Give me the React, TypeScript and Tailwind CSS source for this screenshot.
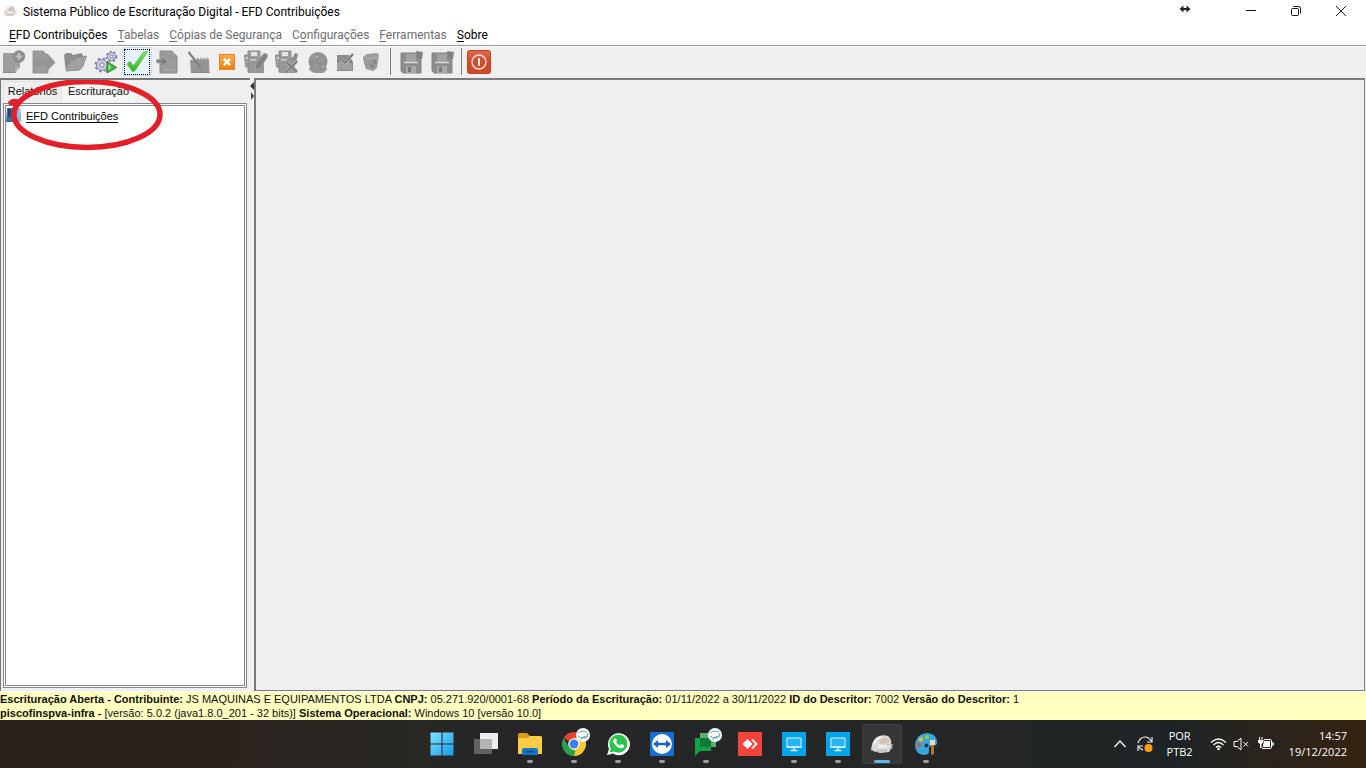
import type { ReactNode } from "react";

function Svg({ size = "size-6", box = "0 0 24 24", children }: { size?: string; box?: string; children: ReactNode }) {
  return (
    <svg viewBox={box} className={`${size} shrink-0`} aria-hidden="true">
      {children}
    </svg>
  );
}

/* ---------- Toolbar drawings ---------- */

const NewIcon = () => (
  <Svg>
    <path d="M1 3h11l6 7v7l-5 6H1z" fill="#9e9e9e" />
    <path d="M1 22.500h12M13 23v-5l5-1" stroke="#888" fill="none" />
    <path d="m13 22.500 5-5.500h-5z" fill="#b8b8b8" />
    <circle cx="17" cy="6.500" r="5.700" fill="#8d8d8d" stroke="#848484" />
    <path d="M17 3v7M13.500 6.500h7" stroke="#c4c4c4" strokeWidth="2" />
  </Svg>
);
const ExportIcon = () => (
  <Svg>
    <path d="M1 1h10l5 5v17H1z" fill="#9c9c9c" stroke="#8b8b8b" strokeWidth=".8" />
    <path d="M1 7.500h14V3l8.500 9.500L15 21v-4.500H1z" fill="#959595" />
    <path d="M2 17.500h13" stroke="#a2a2a2" />
  </Svg>
);
const FolderIcon = () => (
  <Svg>
    <path d="M1 5l2-2h5l2 2 8-2 2 2v5H8L2.500 20z" fill="#8e8e8e" />
    <path d="M3 21 7 11l4-1 2-2 10.500-2-4 11-3 3z" fill="#a1a1a1" stroke="#888" strokeWidth=".9" />
  </Svg>
);
const GearsIcon = () => (
  <Svg>
    <circle cx="8" cy="15" r="5.500" fill="#cdcde6" stroke="#8585ab" />
    <circle cx="8" cy="15" r="6.600" fill="none" stroke="#8484ab" strokeWidth="2" strokeDasharray="2.600 2.700" />
    <circle cx="8" cy="15" r="2.200" fill="#efefef" stroke="#7b7ba3" />
    <circle cx="17.500" cy="6.500" r="4" fill="#d3d3ea" stroke="#8585ab" />
    <circle cx="17.500" cy="6.500" r="4.900" fill="none" stroke="#8484ab" strokeWidth="1.800" strokeDasharray="2.100 2" />
    <circle cx="17.500" cy="6.500" r="1.600" fill="#efefef" stroke="#7b7ba3" />
    <path d="M13 11.500 22.500 17.500 13 23z" fill="#46bb3b" stroke="#257f1f" />
    <path d="M14.500 14v6.500l3-3z" fill="#8ce77f" />
  </Svg>
);
const CheckIcon = () => (
  <Svg>
    <defs>
      <linearGradient id="check" x1="0" y1="0" x2="0" y2="1">
        <stop stopColor="#8be95c" />
        <stop offset="1" stopColor="#2db422" />
      </linearGradient>
    </defs>
    <path d="M2 14 5 11.500 8.500 16 18.500 2 22.500 1.500 10 20.500 7.500 21.500z" fill="url(#check)" stroke="#3fae33" strokeWidth=".7" />
  </Svg>
);
const ImportIcon = () => (
  <Svg>
    <path d="M4 1h12l5 5v17H4z" fill="#9b9b9b" stroke="#8a8a8a" />
    <path d="M16 1v5h5" fill="#b0b0b0" stroke="#8a8a8a" />
    <path d="M.500 9.500H6V6l6 5.500L6 17v-4H.500z" fill="#7f7f7f" stroke="#adadad" strokeWidth=".8" />
    <path d="M7 19.500h11" stroke="#adadad" />
  </Svg>
);
const NotepadIcon = () => (
  <Svg>
    <path d="m3 10 4 0 0-3 2 3 2-3 1 3 2-3 1 3 2-3 1 3 2-3 1 3 1-2 .500 15H4z" fill="#959595" />
    <path d="m1.500 2 11 14 1 2.500" stroke="#808080" strokeWidth="2.200" fill="none" />
    <path d="M4 22.500h18.500" stroke="#848484" />
  </Svg>
);
const CloseIcon = () => (
  <Svg size="size-4" box="0 0 16 16">
    <defs>
      <linearGradient id="orange" x1="0" y1="0" x2="0" y2="1">
        <stop stopColor="#ffab47" />
        <stop offset="1" stopColor="#f07d10" />
      </linearGradient>
    </defs>
    <rect x=".5" y=".5" width="15" height="15" fill="url(#orange)" stroke="#ea8423" />
    <path d="m4.800 4.800 6.400 6.400m0-6.400-6.400 6.400" stroke="#fff" strokeWidth="2.600" />
  </Svg>
);
const DocsBase = () => (
  <>
    <path d="M.500 5h5v12h-4zM4 1h12v9H4z" fill="#a0a0a0" stroke="#8c8c8c" />
    <path d="M5 7h12l3 2v14H4V11z" fill="#979797" />
    <path d="M7 2h6v4H7z" fill="#e4e4e4" />
    <path d="M2 7h2v2H2zM6 9h6v1.500H6z" fill="#cfcfcf" />
    <path d="M4 13v9" stroke="#868686" />
  </>
);
const EditDocsIcon = () => (
  <Svg>
    <DocsBase />
    <path d="m11 19.500 1-6L20 3l3.500 1.500V7l-8 12z" fill="#828282" stroke="#a9a9a9" strokeWidth=".8" />
  </Svg>
);
const DeleteDocsIcon = () => (
  <Svg>
    <DocsBase />
    <path d="m17 9 3-6 3 1-2 8z" fill="#8a8a8a" />
    <path d="m11 12 11 10M22 11 11 22.500" stroke="#b0b0b0" strokeWidth="3.400" />
    <path d="m11 12 11 10M22 11 11 22.500" stroke="#7b7b7b" strokeWidth="1.800" />
  </Svg>
);
const GlobeIcon = () => (
  <Svg>
    <path d="M4 16h16l1 4-4 3H8l-5-3z" fill="#979797" />
    <circle cx="12" cy="11.500" r="9.500" fill="#919191" />
    <path d="M6 6l4-2 2 3-3 3-4 1zM14 6l4 2 1 4-3 1-3-3zM6 14l5 0 2 4-3 1z" fill="#989898" />
    <path d="M10 6h2v1h-2zM16 16h2v1h-2z" fill="#ccc" />
  </Svg>
);
const VerifyIcon = () => (
  <Svg size="size-5" box="0 0 20 20">
    <path d="M1 3h12l4 7v9H1z" fill="#8c8c8c" />
    <path d="M1 10q8-5 15 1v7H1z" fill="#a0a0a0" />
    <path d="M1 10q8-5 15 1" stroke="#737373" fill="none" />
    <path d="m5 7 4 4 8-9" stroke="#bababa" strokeWidth="3" fill="none" />
    <path d="m5 7 4 4 8-9" stroke="#6c6c6c" strokeWidth="1.400" fill="none" />
  </Svg>
);
const TrashIcon = () => (
  <Svg size="size-5" box="0 0 20 20">
    <path d="M1 5 5 2l10-1 2 2-2 13-4 3-7-2z" fill="#9c9c9c" />
    <path d="m2 5 6 2 8-3" stroke="#acacac" strokeWidth="1.500" fill="none" />
    <path d="m1.500 5.500 3 11" stroke="#8b8b8b" />
    <path d="M11 9q4-1 2 3m-1 3q-4 0-2-3" stroke="#7f7f7f" strokeWidth="1.600" fill="none" />
  </Svg>
);
const SaveIcon = () => (
  <Svg>
    <path d="M1 3h20v20H3l-2-2z" fill="#8c8c8c" stroke="#838383" />
    <path d="M6 4h10v8H6z" fill="#a2a2a2" />
    <path d="M4 12.500h14" stroke="#d6d6d6" strokeWidth="1.600" />
    <path d="M6 16h10v7H6z" fill="#a9a9a9" />
    <path d="M8 17h3v5H8z" fill="#777" />
    <path d="m16 1 7 1-1 7-5-1z" fill="#828282" />
  </Svg>
);
const PowerIcon = () => (
  <Svg>
    <defs>
      <linearGradient id="power" x1="0" y1="0" x2="0" y2="1">
        <stop stopColor="#e0664e" />
        <stop offset=".5" stopColor="#d04c2e" />
        <stop offset="1" stopColor="#cc4a2a" />
      </linearGradient>
    </defs>
    <rect x=".5" y=".5" width="23" height="23" rx="2" fill="url(#power)" stroke="#ba4328" />
    <circle cx="12" cy="12" r="7" fill="none" stroke="#fadfd7" strokeWidth="1.500" />
    <path d="M12 8v8" stroke="#fff" strokeWidth="1.800" />
  </Svg>
);

/* ---------- Toolbar ---------- */

function Tool({ label, width = "w-[31px]", children }: { label: string; width?: string; children: ReactNode }) {
  return (
    <button type="button" aria-label={label} className={`${width} flex h-full shrink-0 items-center justify-center`}>
      {children}
    </button>
  );
}

const Separator = ({ width }: { width: string }) => (
  <span className={`${width} flex h-[27px] shrink-0 justify-center`}>
    <span className="w-px bg-[#7c7c7c]" />
  </span>
);

function Toolbar() {
  return (
    <div className="flex h-[31px] shrink-0 items-center bg-[#efefef] pb-0.5">
      <Tool label="Nova escrituração" width="w-7"><NewIcon /></Tool>
      <Tool label="Importar"><ExportIcon /></Tool>
      <Tool label="Abrir"><FolderIcon /></Tool>
      <Tool label="Processar"><GearsIcon /></Tool>
      <Tool label="Verificar pendências">
        <span className="flex h-[29px] w-[30px] items-center justify-center rounded-sm border border-[#c6e0f5] bg-[#e5f1fb]">
          <span className="flex h-[26px] w-[26px] items-center justify-center border border-dotted border-black">
            <CheckIcon />
          </span>
        </span>
      </Tool>
      <Tool label="Gerar arquivo"><ImportIcon /></Tool>
      <Tool label="Assinar"><NotepadIcon /></Tool>
      <Tool label="Fechar escrituração" width="w-[26px]"><CloseIcon /></Tool>
      <Tool label="Editar registros"><EditDocsIcon /></Tool>
      <Tool label="Excluir registros"><DeleteDocsIcon /></Tool>
      <Tool label="Transmitir"><GlobeIcon /></Tool>
      <Tool label="Validar" width="w-[26px]"><VerifyIcon /></Tool>
      <Tool label="Lixeira" width="w-[26px]"><TrashIcon /></Tool>
      <Separator width="w-[11px]" />
      <Tool label="Salvar cópia"><SaveIcon /></Tool>
      <Tool label="Restaurar cópia"><SaveIcon /></Tool>
      <Separator width="w-[7px]" />
      <Tool label="Sair" width="w-7"><PowerIcon /></Tool>
    </div>
  );
}

/* ---------- Window chrome ---------- */

const HelmetIcon = ({ size }: { size: string }) => (
  <Svg size={size}>
    <path d="M1 18Q2 8 7 5q5-3 11-1 4 3 3 8l1 3-3 5-9 1-6-2z" fill="#dcdad8" />
    <path d="M9 8q5-4 10-1v4l-9 1z" fill="#d6c3b0" />
    <path d="M8 12q6 3 14 0l-1 3-12 1z" fill="#f2f1ef" />
    <path d="M17 13h6M19 16h4M4 19.500l13-1" stroke="#b1aeab" fill="none" />
    <path d="M4 12q2-6 8-7" stroke="#f4f4f4" strokeWidth="2" fill="none" />
  </Svg>
);

function TitleBar() {
  return (
    <header className="flex h-[23px] shrink-0 items-center pb-0.5 pl-[3px]">
      <HelmetIcon size="size-3.5" />
      <h1 className="ml-1.5 pt-0.5 text-[12px] leading-4 text-black">
        Sistema Público de Escrituração Digital - EFD Contribuições
      </h1>
      <svg viewBox="0 0 12 8" className="mr-[37px] mb-1 ml-auto h-2 w-3" aria-hidden="true">
        <path d="M3 4h6" stroke="#222" strokeWidth="2" />
        <path d="M4.500.5v7L.5 4zM7.500.5v7l4-3.500z" fill="#222" />
      </svg>
      <button type="button" aria-label="Minimizar" className="flex w-[46px] justify-center">
        <Svg size="size-3" box="0 0 12 12"><path d="M1 5.500h10" stroke="#111" /></Svg>
      </button>
      <button type="button" aria-label="Restaurar" className="flex w-11 justify-center">
        <Svg size="size-3" box="0 0 12 12">
          <rect x="1.500" y="3.500" width="7" height="7" rx="1" fill="none" stroke="#111" />
          <path d="M3.500 1.500H8.500Q10.500 1.500 10.500 3.500V8.500" fill="none" stroke="#111" />
        </Svg>
      </button>
      <button type="button" aria-label="Fechar" className="mr-0.5 flex w-[46px] justify-center">
        <Svg size="size-3" box="0 0 12 12"><path d="m1 1 10 10M11 1 1 11" stroke="#222" /></Svg>
      </button>
    </header>
  );
}

const menus = [
  { key: "E", pre: "", rest: "FD Contribuições", on: true },
  { key: "T", pre: "", rest: "abelas", on: false },
  { key: "C", pre: "", rest: "ópias de Segurança", on: false },
  { key: "o", pre: "C", rest: "nfigurações", on: false },
  { key: "F", pre: "", rest: "erramentas", on: false },
  { key: "S", pre: "", rest: "obre", on: true },
];

function MenuBar() {
  return (
    <nav className="flex h-[22px] shrink-0 items-center gap-2.5 pt-0.5 pl-[9px] text-[12px] leading-4">
      {menus.map((m) => (
        <button key={m.key} type="button" className={m.on ? "text-black" : "text-[#6d6d6d]"}>
          {m.pre}
          <span className="underline underline-offset-2">{m.key}</span>
          {m.rest}
        </button>
      ))}
    </nav>
  );
}

/* ---------- Work area ---------- */

function SidePanel() {
  return (
    <aside className="relative flex w-[250px] shrink-0 flex-col border-t-2 border-l border-[#77777b] pb-[3px] pl-[2px] font-['Liberation_Sans',Arial,sans-serif] text-[11px]">
      <div role="tablist" className="flex h-[22px] shrink-0 pt-px">
        <button type="button" role="tab" aria-selected="false" className="w-[59px] border border-b-0 border-[#e2e2e2] pb-0.5 text-center leading-4 text-[#111]">
          Relatórios
        </button>
        <button type="button" role="tab" aria-selected="true" className="w-[73px] border border-b-0 border-[#f8f8f8] bg-[#f6f6f6] pb-0.5 text-center leading-4 text-[#111]">
          Escrituração
        </button>
      </div>
      <div className="mr-[3px] mt-px flex-1 border-[3px] border-double border-[#85878c] bg-white">
        <a href="#efd" className="flex items-center text-black">
          <Svg size="h-4 w-[15px]" box="0 0 15 16">
            <path d="M1 1h13l1 14H0z" fill="#3c6ca8" />
            <path d="M7 1h7l1 14H7z" fill="#8ebbe6" />
            <path d="M2 2h3v8H2z" fill="#27456f" />
          </Svg>
          <span className="ml-[5px] mt-1 border-b border-black leading-3">EFD Contribuições</span>
        </a>
      </div>
      <svg viewBox="0 0 170 76" className="pointer-events-none absolute left-0 top-0 h-[76px] w-[170px]" aria-hidden="true">
        <ellipse cx="86" cy="34.500" rx="73" ry="33" fill="none" stroke="#e3202a" strokeWidth="5.500" />
        <path d="M7 22q5-6 13-1l-4 5-8-1z" fill="#e3202a" />
      </svg>
    </aside>
  );
}

function WorkArea() {
  return (
    <main className="flex min-h-0 flex-1 bg-[#efefef]">
      <SidePanel />
      <div className="w-1 shrink-0 bg-[#f3f3f3]">
        <svg viewBox="0 0 4 24" className="h-6 w-1" aria-hidden="true">
          <path d="M4 4v8L0 8z" fill="#333" />
          <path d="M1 14v8l3-4z" fill="#444" />
        </svg>
      </div>
      <section aria-label="Área de trabalho" className="mr-px flex-1 border-2 border-r border-b border-[#7b7b80] bg-[#efefef]" />
    </main>
  );
}

function StatusBar() {
  return (
    <footer className="shrink-0 whitespace-nowrap border-t border-white bg-[#ffffc0] font-['Liberation_Sans',Arial,sans-serif] text-[11px] leading-[14px] text-[#111]">
      <p>
        <b>Escrituração Aberta - Contribuinte:</b> JS MAQUINAS E EQUIPAMENTOS LTDA <b>CNPJ:</b> 05.271.920/0001-68{" "}
        <b>Período da Escrituração:</b> 01/11/2022 a 30/11/2022 <b>ID do Descritor:</b> 7002 <b>Versão do Descritor:</b> 1
      </p>
      <p>
        <b>piscofinspva-infra -</b> [versão: 5.0.2 (java1.8.0_201 - 32 bits)] <b>Sistema Operacional:</b> Windows 10 [versão 10.0]
      </p>
    </footer>
  );
}

/* ---------- Taskbar ---------- */

const Badge = () => (
  <>
    <circle cx="21" cy="3" r="7" fill="#f7fbfb" />
    <path d="M16 1q3-3 9-1M16 4q5 4 10-1M19 8q0-3 6-3l1-4M22 4v3" stroke="#62adaf" fill="none" strokeWidth="1" />
  </>
);

const WindowsLogo = () => (
  <Svg>
    <defs>
      <linearGradient id="win" x1="0" y1="0" x2="1" y2="1">
        <stop stopColor="#80e2ff" />
        <stop offset="1" stopColor="#159be8" />
      </linearGradient>
    </defs>
    <path d="M.5.500h11v11H.5zM12.500.500h11v11h-11zM.5 12.500h11v11H.5zM12.500 12.500h11v11h-11z" fill="url(#win)" />
  </Svg>
);
const TaskView = () => (
  <Svg>
    <path d="M0 7h18v15H0z" fill="#626262" />
    <path d="M6 1h18v16H6z" fill="#ededed" />
    <path d="M6 7h12v10H6z" fill="#b4b4b4" />
  </Svg>
);
const Explorer = () => (
  <Svg>
    <path d="M0 3q0-2 2-2h7l3 3h10q2 0 2 2v4H0z" fill="#dd9c13" />
    <path d="M0 6h10l2-2h10q2 0 2 2v16H0z" fill="#ffcc45" />
    <path d="M4 18q0-2 2-2h12q2 0 2 2v5H4z" fill="#1675c5" />
    <path d="M8 19h8v1.500H8z" fill="#0b4d92" />
  </Svg>
);
const Chrome = () => (
  <svg viewBox="-4 -4 32 28" className="h-7 w-8 shrink-0" aria-hidden="true">
    <path d="M12 12 1.600 6A12 12 0 0 1 22.400 6z" fill="#e5432f" />
    <path d="M12 12V6h10.400A12 12 0 0 1 12 24l-2-4z" fill="#fcc832" />
    <path d="M12 24A12 12 0 0 1 1.600 6L7 15l5 3 1.500 1z" fill="#2da04b" />
    <circle cx="12" cy="12" r="5.800" fill="#fff" />
    <circle cx="12" cy="12" r="4.500" fill="#3f7eea" />
    <Badge />
  </svg>
);
const WhatsApp = () => (
  <Svg>
    <path d="M1 23 3 17A11 11 0 1 1 7 21.500z" fill="#fff" />
    <path d="M3.500 20.500 4.800 16.500A9 9 0 1 1 8 19.500z" fill="#2bc44d" />
    <path d="M8.500 6.500q-3 2 .5 6 4 5 8 3.500 2-2 .5-3l-2-1-1.500 1.500q-3-1-4-3.500l1-1-1-2.500z" fill="#fff" />
  </Svg>
);
const TeamViewer = () => (
  <Svg>
    <rect width="24" height="24" rx="1" fill="#1570d4" />
    <circle cx="12" cy="12" r="10" fill="#fff" />
    <path d="m3 12 5-4v2.700h8V8l5 4-5 4v-2.700H8V16z" fill="#1762b9" />
  </Svg>
);
const Chat = () => (
  <svg viewBox="-4 -4 32 28" className="h-7 w-8 shrink-0" aria-hidden="true">
    <path d="M6 1h16v14H6z" fill="#5fae75" />
    <path d="M1 6h16v13H6l-5 5z" fill="#12a145" />
    <path d="M6 6h11v9H6z" fill="#0c7b34" />
    <Badge />
  </svg>
);
const AnyDesk = () => (
  <Svg>
    <path d="M0 0h24v24H0z" fill="#f4433b" />
    <path d="m9.500 7 5 5-5 5-5-5z" fill="#fff" />
    <path d="m14 7.500 4.500 4.500-4.500 4.500" stroke="#fff" strokeWidth="1.800" fill="none" />
  </Svg>
);
const Monitor = () => (
  <Svg>
    <path d="M0 0h24v24H0z" fill="#06a5ea" />
    <path d="M5 6h14v9H5z" fill="#28b4f0" stroke="#d8f3ff" strokeWidth="1" />
    <path d="M4.500 15.200h15" stroke="#d8f3ff" strokeWidth="1.500" />
    <path d="M12 15v3M8.500 18.500h7" stroke="#d8f3ff" strokeWidth="1.500" />
  </Svg>
);
const Paint = () => (
  <Svg>
    <path d="M1 14Q1 3 12 1q11 0 11 10 0 3-5 3-4 0-3 4 1 4-4 5Q2 23 1 14z" fill="#36a5e0" />
    <circle cx="4.500" cy="13" r="2.200" fill="#d65b2a" />
    <circle cx="7" cy="7.500" r="2.200" fill="#f6ba24" />
    <circle cx="13" cy="5" r="2.200" fill="#91c93e" />
    <circle cx="12.500" cy="13.500" r="2" fill="#18384b" />
    <path d="M16 8h5v5h-5z" fill="#efdab9" />
    <path d="M17 13h3v9q-1.500 2-3 0z" fill="#b97131" />
  </Svg>
);

const apps: { label: string; icon: ReactNode; state: "idle" | "running" | "active" }[] = [
  { label: "Iniciar", icon: <WindowsLogo />, state: "idle" },
  { label: "Visão de tarefas", icon: <TaskView />, state: "idle" },
  { label: "Explorador de Arquivos", icon: <Explorer />, state: "running" },
  { label: "Google Chrome", icon: <Chrome />, state: "running" },
  { label: "WhatsApp", icon: <WhatsApp />, state: "running" },
  { label: "TeamViewer", icon: <TeamViewer />, state: "running" },
  { label: "Google Chat", icon: <Chat />, state: "running" },
  { label: "AnyDesk", icon: <AnyDesk />, state: "idle" },
  { label: "Área remota 1", icon: <Monitor />, state: "running" },
  { label: "Área remota 2", icon: <Monitor />, state: "running" },
  { label: "EFD Contribuições", icon: <HelmetIcon size="size-6" />, state: "active" },
  { label: "Paint", icon: <Paint />, state: "running" },
];

function Taskbar() {
  return (
    <div className="grid h-12 shrink-0 grid-cols-[1fr_auto_1fr] items-center bg-[#2b211f] pl-0.5 font-['Open_Sans','Noto_Sans',sans-serif] text-[11px] text-white">
      <div className="h-full bg-linear-to-r from-[#2c201d] via-[#2b211c] via-45% to-[#282825]" />
      <div className="flex h-full items-center bg-linear-to-r from-[#282825] via-[#262628] via-10% to-[#252626]">
        {apps.map((a) => (
          <button key={a.label} type="button" aria-label={a.label} className="flex h-full w-11 flex-col items-center justify-center">
            <span className={`flex h-10 w-10 flex-col items-center rounded ${a.state === "active" ? "bg-[#363637] ring-1 ring-[#404041] ring-inset" : ""}`}>
              <span className="flex h-9 items-end justify-center pb-1">{a.icon}</span>
              {a.state === "running" && <span className="h-[3px] w-1.5 rounded-full bg-[#9b9b9b]" />}
              {a.state === "active" && <span className="h-[3px] w-4 rounded-full bg-[#5fb8ec]" />}
            </span>
          </button>
        ))}
      </div>
      <div className="flex h-full items-center justify-end bg-linear-to-r from-[#252626] via-[#1e2426] via-55% to-[#35220f] pr-[19px] leading-4">
        <button type="button" aria-label="Mostrar ícones ocultos" className="mr-2">
          <Svg size="size-4" box="0 0 16 16"><path d="m2.500 11 5.500-6 5.500 6" stroke="#fff" strokeWidth="1.300" fill="none" /></Svg>
        </button>
        <Svg size="size-[18px]" box="0 0 18 18">
          <path d="M2 8Q4 2 9 2q4 0 6 4M16 2v5h-5M7 15q-3-1-4-3M2 16v-5h5" stroke="#f2f2f2" strokeWidth="1.200" fill="none" />
          <circle cx="12.500" cy="13" r="4" fill="#ff9c12" />
        </Svg>
        <p className="ml-3 w-7 text-center">POR PTB2</p>
        <Svg size="ml-4 h-4 w-[17px]" box="0 0 17 16">
          <path d="M1 6.500q7.500-7 15 0M3.500 9q5-5 10 0M6 11.500q2.500-2.500 5 0" stroke="#fff" strokeWidth="1.300" fill="none" />
          <circle cx="8.500" cy="13" r="1.300" fill="#fff" />
        </Svg>
        <Svg size="ml-1.5 size-4" box="0 0 16 16">
          <path d="M1 5.500h3l4-3.500v12L4 10.500H1zM10.500 6l4.500 4.500m0-4.500-4.500 4.500" stroke="#fff" fill="none" />
        </Svg>
        <Svg size="ml-2 h-4 w-[17px]" box="0 0 17 16">
          <rect x="4.500" y="3.500" width="10" height="9" rx="1.500" fill="none" stroke="#fff" />
          <path d="M6 5h7v6H6z" fill="#fff" />
          <path d="M15.500 6.500h1v3h-1z" fill="#fff" stroke="#fff" strokeWidth=".5" />
          <path d="M0 3h7v4L5 9v3H3V9L0 7z" fill="#20211f" />
          <path d="M1 4h5.500v2.500L4.500 8v4H3V8L1 6.500zM2 1h1v3H2zM4.500 1h1v3h-1z" fill="#fff" />
        </Svg>
        <p className="ml-[15px] text-right">
          14:57
          <br />
          19/12/2022
        </p>
      </div>
    </div>
  );
}

export default function App() {
  return (
    <div className="flex h-screen flex-col overflow-hidden bg-white font-[Roboto,'Open_Sans',sans-serif]">
      <TitleBar />
      <MenuBar />
      <div className="h-[2px] shrink-0 border-t border-[#9a9a9a] bg-white" />
      <Toolbar />
      <WorkArea />
      <StatusBar />
      <Taskbar />
    </div>
  );
}
